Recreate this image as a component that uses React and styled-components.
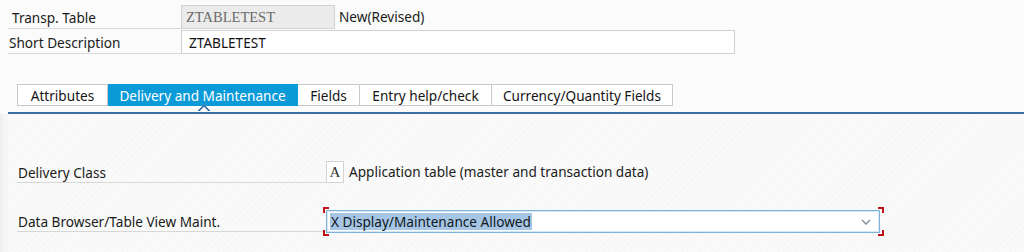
import React from 'react'
import styled, { createGlobalStyle } from 'styled-components'

const GlobalStyle = createGlobalStyle`
  html, body {
    margin: 0;
    padding: 0;
    background: #fafbfa;
  }
  body {
    font-family: "Noto Sans", "DejaVu Sans", sans-serif;
    font-size: 13.6px;
    color: #1b1b1b;
  }
`

const Page = styled.div`
  width: 1024px;
  height: 252px;
  overflow: hidden;
  display: flex;
  flex-direction: column;
  background: #fafbfa;
`

const Header = styled.div`
  display: flex;
  flex-direction: column;
  gap: 1px;
  padding: 5px 0 0 8px;
`

const HeaderRow = styled.div`
  display: flex;
  align-items: stretch;
  height: 24px;
`

const HeaderLabel = styled.div`
  width: 173px;
  box-sizing: border-box;
  padding-left: ${p => p.$indent || 1}px;
  padding-top: 1px;
  display: flex;
  align-items: center;
  border-bottom: 1px solid #d9d9d9;
  white-space: nowrap;
`

const Field = styled.div`
  box-sizing: border-box;
  width: ${p => p.$width}px;
  height: 24px;
  display: flex;
  align-items: center;
  padding-left: ${p => (p.$serif ? 4 : 7)}px;
  border: 1px solid ${p => (p.$readonly ? '#d2d2d2' : '#cfcfcf')};
  background: ${p => (p.$readonly ? '#ebebeb' : '#ffffff')};
  color: ${p => (p.$readonly ? '#6a6a6a' : '#111')};
  font-family: ${p => (p.$serif ? '"Liberation Serif", serif' : 'inherit')};
  font-size: ${p => (p.$serif ? '14.5px' : 'inherit')};
  white-space: nowrap;
`

const Status = styled.div`
  display: flex;
  align-items: center;
  padding-left: 4px;
  padding-bottom: 1px;
`

const TabBar = styled.div`
  display: flex;
  margin: 30px 0 0 17px;
  height: 22px;
`

const Tab = styled.div`
  box-sizing: border-box;
  width: ${p => p.$width}px;
  height: 22px;
  display: flex;
  align-items: center;
  justify-content: center;
  border: 1px solid #c9c9c9;
  border-left-width: ${p => (p.$first ? 1 : 0)}px;
  background: ${p => (p.$active ? '#0a9ad7' : '#ffffff')};
  color: ${p => (p.$active ? '#ffffff' : '#151515')};
  border-color: ${p => (p.$active ? '#0a9ad7' : '#c9c9c9')};
  white-space: nowrap;
`

const Divider = styled.div`
  position: relative;
  margin: 6px 0 0 8px;
  height: 2px;
  background: #3b6fa4;
`

const Notch = styled.div`
  position: absolute;
  left: 191px;
  top: -6px;
  width: 8px;
  height: 8px;
  background: #fafbfa;
  border-left: 2px solid #3b6fa4;
  border-top: 2px solid #3b6fa4;
  transform: rotate(45deg);
  clip-path: polygon(0 0, 100% 0, 0 100%);
`

const Body = styled.div`
  flex: 1;
  display: flex;
  flex-direction: column;
  padding: 47px 0 0 17px;
  background:
    linear-gradient(90deg, #eef0ee 0, #eef0ee 3px, #f4f5f4 3px, #f4f5f4 8px, transparent 8px),
    repeating-linear-gradient(135deg, #f9faf9 0, #f9faf9 3px, #f5f7f5 3px, #f5f7f5 4px);
`

const FormRow = styled.div`
  display: flex;
  align-items: stretch;
  height: 22px;
  margin-bottom: ${p => p.$gap || 0}px;
`

const FormLabel = styled.div`
  width: 309px;
  box-sizing: border-box;
  padding-left: 1px;
  padding-top: 1px;
  display: flex;
  align-items: center;
  border-bottom: 1px solid #d7d7d7;
  white-space: nowrap;
`

const CodeBox = styled.div`
  box-sizing: border-box;
  width: 18px;
  height: 22px;
  display: flex;
  align-items: center;
  justify-content: center;
  background: #fff;
  border: 1px solid #d3d3d3;
  font-family: "Liberation Serif", serif;
  font-size: 15px;
  color: #333;
`

const CodeText = styled.div`
  display: flex;
  align-items: center;
  padding-left: 5px;
  padding-bottom: 1px;
`

const SelectWrap = styled.div`
  position: relative;
  box-sizing: border-box;
  width: 554px;
  height: 23px;
  display: flex;
  align-items: center;
  padding: 0 8px 0 3px;
  background: #fff;
  border: 1px solid #7fb2da;
  box-shadow: inset 0 0 0 1px #d7e8f5;
`

const SelectText = styled.span`
  flex: 1;
  display: flex;
`

const Selected = styled.span`
  background: #a7c6e6;
  color: #101820;
  padding: 0 1px;
  line-height: 17px;
`

const Corner = styled.span`
  position: absolute;
  width: 4px;
  height: 4px;
  border-color: #c1121c;
  border-style: solid;
  border-width: 0;
  ${p => (p.$top ? 'top: -4px;' : 'bottom: -4px;')}
  ${p => (p.$left ? 'left: -4px;' : 'right: -5px;')}
  ${p => (p.$top ? 'border-top-width: 2px;' : 'border-bottom-width: 2px;')}
  ${p => (p.$left ? 'border-left-width: 2px;' : 'border-right-width: 2px;')}
`

const Chevron = () => (
  <svg width="10" height="6" viewBox="0 0 10 6">
    <path d="M1 1 L5 5 L9 1" fill="none" stroke="#7d8a96" strokeWidth="1.3" />
  </svg>
)

const tabs = [
  { label: 'Attributes', width: 91 },
  { label: 'Delivery and Maintenance', width: 190, active: true },
  { label: 'Fields', width: 62 },
  { label: 'Entry help/check', width: 132 },
  { label: 'Currency/Quantity Fields', width: 181 }
]

export default function App() {
  return (
    <Page>
      <GlobalStyle />
      <Header>
        <HeaderRow>
          <HeaderLabel $indent={4}>Transp. Table</HeaderLabel>
          <Field $width={154} $readonly $serif>ZTABLETEST</Field>
          <Status>New(Revised)</Status>
        </HeaderRow>
        <HeaderRow>
          <HeaderLabel>Short Description</HeaderLabel>
          <Field $width={554}>ZTABLETEST</Field>
        </HeaderRow>
      </Header>
      <TabBar>
        {tabs.map((t, i) => (
          <Tab key={t.label} $width={t.width} $active={t.active} $first={i === 0}>
            {t.label}
          </Tab>
        ))}
      </TabBar>
      <Divider>
        <Notch />
      </Divider>
      <Body>
        <FormRow $gap={27}>
          <FormLabel>Delivery Class</FormLabel>
          <CodeBox>A</CodeBox>
          <CodeText>Application table (master and transaction data)</CodeText>
        </FormRow>
        <FormRow>
          <FormLabel>Data Browser/Table View Maint.</FormLabel>
          <SelectWrap>
            <Corner $top $left />
            <Corner $left />
            <Corner $top />
            <Corner />
            <SelectText>
              <Selected>X Display/Maintenance Allowed</Selected>
            </SelectText>
            <Chevron />
          </SelectWrap>
        </FormRow>
      </Body>
    </Page>
  )
}
